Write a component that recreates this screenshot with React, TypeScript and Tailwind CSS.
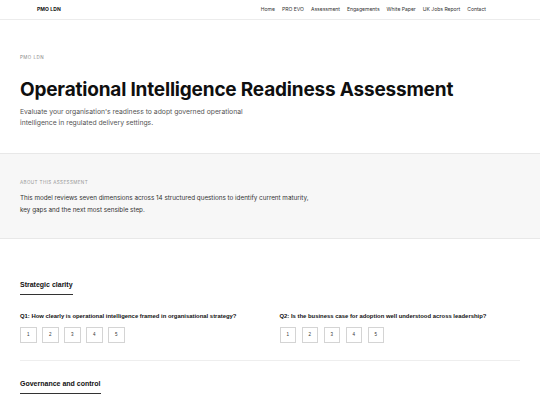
import React from "react";

const nav = ["Home", "PRO EVO", "Assessment", "Engagements", "White Paper", "UK Jobs Report", "Contact"];

function Scale() {
  return (
    <div className="flex gap-[5.5px]">
      {[1, 2, 3, 4, 5].map((n) => (
        <div
          key={n}
          className="w-[16.5px] h-[16px] border border-[#d4d4d4] bg-white flex items-center justify-center text-[4.5px] text-[#333]"
        >
          {n}
        </div>
      ))}
    </div>
  );
}

export default function App() {
  return (
    <div className="w-[540px] h-[405px] overflow-hidden bg-white text-[#111]" style={{ fontFamily: "Inter, 'Liberation Sans', sans-serif" }}>
      <header className="h-[20px] border-b border-[#ececec] flex items-center justify-between pl-[37px] pr-[54px]">
        <div className="text-[5px] font-bold tracking-[0.02em] text-[#111]">PMO LDN</div>
        <nav className="flex gap-[7px] text-[5.05px] text-[#333]">
          {nav.map((n) => (
            <span key={n}>{n}</span>
          ))}
        </nav>
      </header>

      <section className="px-[20px] pt-[36px] h-[133px]">
        <div className="text-[4.5px] tracking-[0.1em] text-[#888] leading-none">PMO LDN</div>
        <h1 className="mt-[17px] text-[19px] font-bold leading-[24px] tracking-[-0.01em] text-[#0f0f0f]">
          Operational Intelligence Readiness Assessment
        </h1>
        <p className="mt-[4px] w-[244px] text-[6.8px] leading-[11.3px] text-[#555]">
          Evaluate your organisation's readiness to adopt governed operational intelligence in regulated delivery settings.
        </p>
      </section>

      <section className="h-[86px] bg-[#f7f7f7] border-y border-[#e8e8e8] px-[20px] pt-[27px]">
        <div className="text-[4.6px] tracking-[0.08em] text-[#999] leading-none">ABOUT THIS ASSESSMENT</div>
        <p className="mt-[6px] w-[300px] text-[6.3px] leading-[12.3px] text-[#333]">
          This model reviews seven dimensions across 14 structured questions to identify current maturity, key gaps and the next most sensible step.
        </p>
      </section>

      <section className="px-[20px] pt-[31px]" style={{ fontFamily: "'Liberation Sans', Arial, sans-serif" }}>
        <div className="inline-block border-b border-[#333] pb-[5px] text-[7px] font-bold leading-[9px] text-[#111]">
          Strategic clarity
        </div>
        <div className="mt-[18px] grid grid-cols-2 gap-[19px] pb-[17px] border-b border-[#eee] w-[500px]">
          <div>
            <div className="text-[5.9px] font-bold leading-[7px] text-[#111] whitespace-nowrap">
              Q1: How clearly is operational intelligence framed in organisational strategy?
            </div>
            <div className="mt-[7px]">
              <Scale />
            </div>
          </div>
          <div>
            <div className="text-[5.9px] font-bold leading-[7px] text-[#111] whitespace-nowrap">
              Q2: Is the business case for adoption well understood across leadership?
            </div>
            <div className="mt-[7px]">
              <Scale />
            </div>
          </div>
        </div>
        <div className="mt-[18px] inline-block border-b border-[#333] pb-[5px] text-[7px] font-bold leading-[9px] text-[#111]">
          Governance and control
        </div>
      </section>
    </div>
  );
}
